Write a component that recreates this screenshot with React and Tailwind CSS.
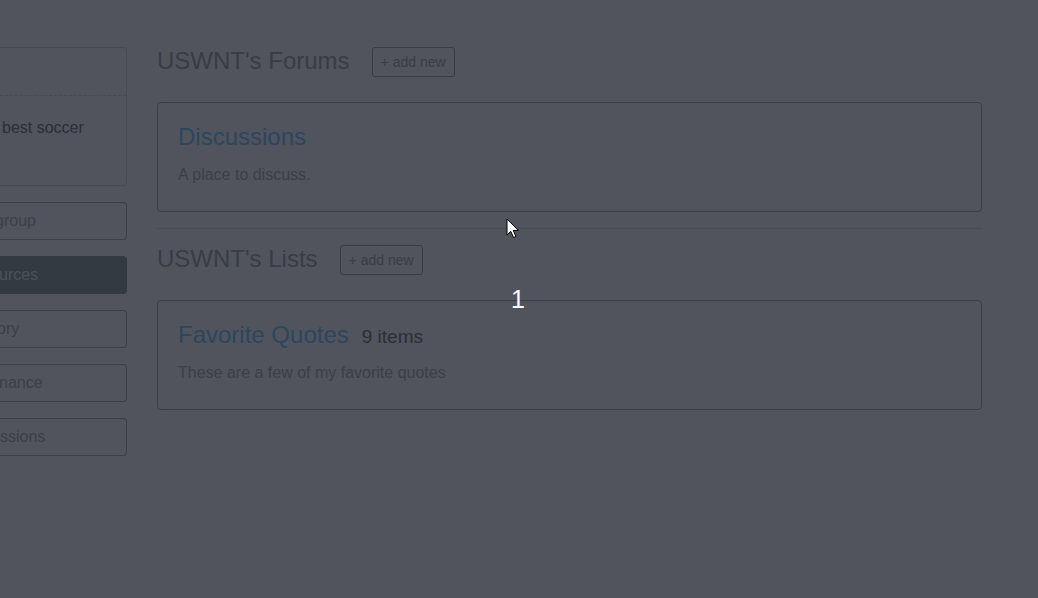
import React from 'react';

const sideLinks = [
  { label: 'group', active: false, shift: '-ml-[5px]' },
  { label: 'urces', active: true, shift: '-ml-[1px]' },
  { label: 'ory', active: false, shift: '-ml-[3px]' },
  { label: 'nance', active: false, shift: '-ml-[1px]' },
  { label: 'ssions', active: false, shift: 'ml-0' },
];

function SectionHeader({ title }) {
  return (
    <div className="flex items-center gap-[22px] h-[30px]">
      <h3 className="mb-[2px] text-[24px] leading-[28px] text-[#393c43]">{title}</h3>
      <button className="h-[30px] px-[8px] border border-[#393c43] rounded-[3px] text-[14px] text-[#3a3d44]">
        + add new
      </button>
    </div>
  );
}

function Card({ title, extra, text }) {
  return (
    <div className="border border-[#3b3e45] rounded-[4px] pl-[20px] pt-[20px] pb-[25px]">
      <div className="flex items-baseline gap-[13px] h-[27px]">
        <span className="text-[24px] leading-[27px] text-[#2b4660]">{title}</span>
        {extra && <span className="text-[19px] text-[#2b2e34]">{extra}</span>}
      </div>
      <p className="mt-[14px] text-[16px] leading-[22px] text-[#3c3f46]">{text}</p>
    </div>
  );
}

export default function App() {
  return (
    <div className="relative min-h-screen overflow-hidden bg-[#51545c] font-['Liberation_Sans','Helvetica',sans-serif]">
      <div className="flex pt-[47px]">
        <aside className="w-[127px] shrink-0 overflow-hidden">
          <div className="border-y border-r border-[#484b52] rounded-r-[4px]">
            <div className="h-[48px] border-b border-dashed border-[#484b52]" />
            <div className="h-[89px] pt-[21px]">
              <p className="text-[16px] leading-[22px] text-[#2b2e34] ml-[2px] whitespace-nowrap">best soccer</p>
            </div>
          </div>
          <div className="mt-[16px] flex flex-col gap-[16px]">
            {sideLinks.map((l) => (
              <div
                key={l.label}
                className={
                  'h-[38px] flex items-center rounded-r-[4px] border-y border-r ' +
                  (l.active
                    ? 'bg-[#343a42] border-[#343a42] text-[#4b5159]'
                    : 'border-[#3c3f46] text-[#3c3f46]')
                }
              >
                <span className={'text-[16px] whitespace-nowrap ' + l.shift}>{l.label}</span>
              </div>
            ))}
          </div>
        </aside>

        <main className="ml-[30px] w-[825px]">
          <SectionHeader title="USWNT's Forums" />
          <div className="mt-[25px]">
            <Card title="Discussions" text="A place to discuss." />
          </div>
          <hr className="mt-[16px] border-0 border-t border-[#484b52]" />
          <div className="mt-[16px]">
            <SectionHeader title="USWNT's Lists" />
          </div>
          <div className="mt-[25px]">
            <Card title="Favorite Quotes" extra="9 items" text="These are a few of my favorite quotes" />
          </div>
        </main>
      </div>

      {/* loading counter over the backdrop */}
      <div className="absolute left-[511px] top-[284px] text-[25px] leading-[30px] text-white">1</div>

      {/* mouse pointer */}
      <svg className="absolute left-[506px] top-[218px]" width="14" height="22" viewBox="0 0 14 22">
        <path
          d="M1 1 L1 17 L4.8 13.4 L7.6 19.6 L10 18.5 L7.3 12.5 L12.4 12.5 Z"
          fill="#fff"
          stroke="#000"
          strokeWidth="1"
          strokeLinejoin="round"
        />
      </svg>
    </div>
  );
}
